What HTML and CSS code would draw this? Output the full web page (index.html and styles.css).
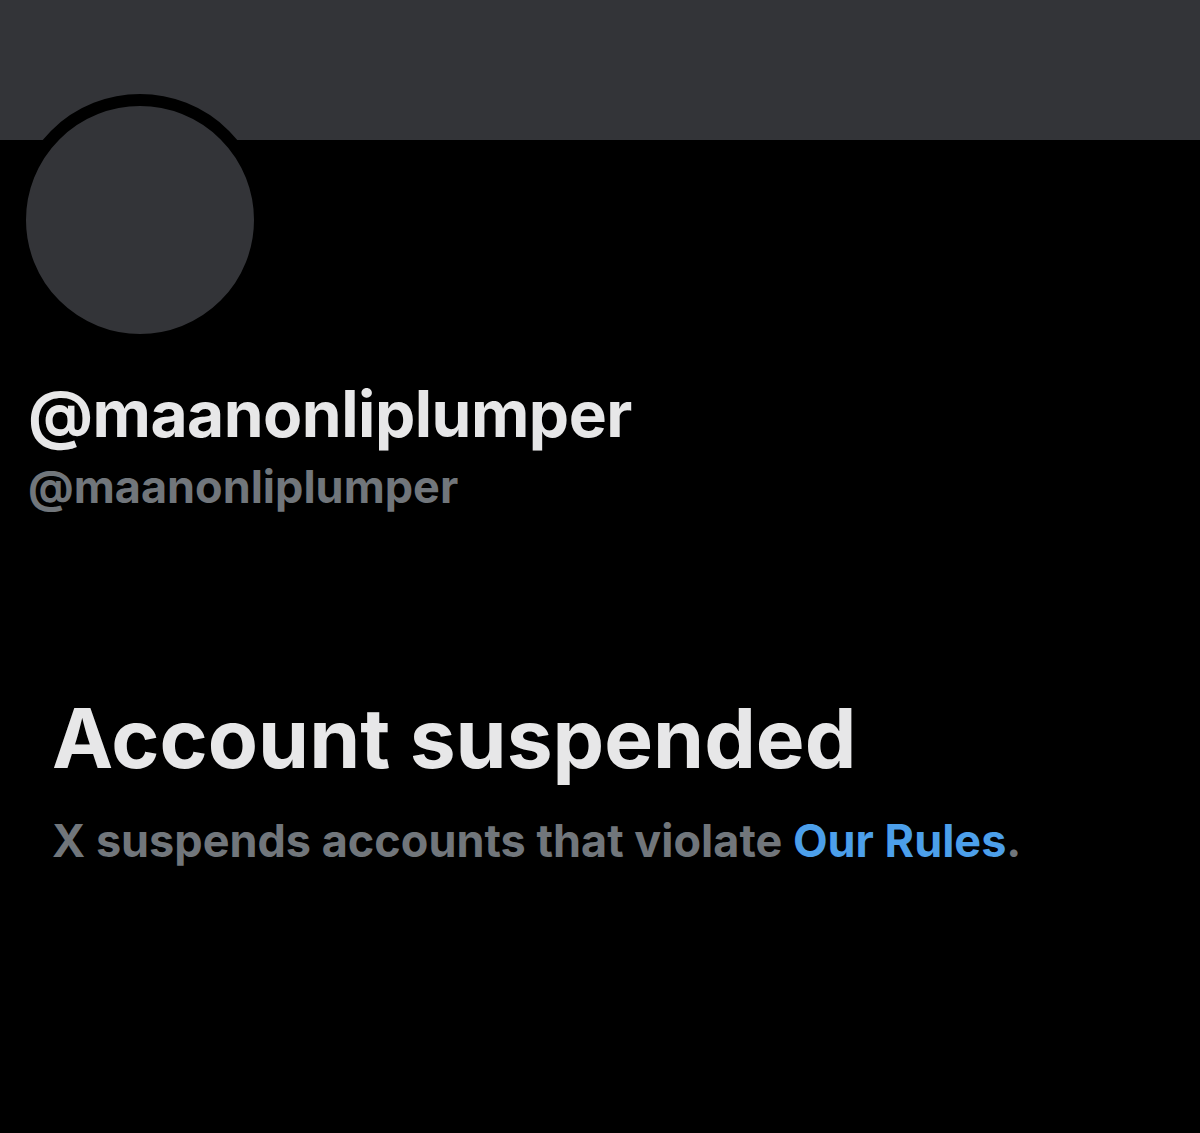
FILE: index.html
```html
<!DOCTYPE html>
<html>
<head>
	<title>@maanonliplumper / X</title>
	<link rel="stylesheet" href="styles.css">
</head>
<body>
	<div class="banner"></div>
	<div class="profile">
		<div class="avatar"></div>
		<div class="names">
			<h1 class="display-name">@maanonliplumper</h1>
			<div class="handle">@maanonliplumper</div>
		</div>
	</div>
	<div class="notice">
		<h2>Account suspended</h2>
		<p>X suspends accounts that violate <a href="#">Our Rules</a>.</p>
	</div>
</body>
</html>
```

FILE: styles.css
```css
body {
	margin: 0;
	background-color: #000;
	color: #e7e7e8;
	font-family: Inter, "Liberation Sans", sans-serif;
}
.banner {
	height: 140px;
	background-color: #333438;
}
.profile {
	padding-left: 14px;
}
.avatar {
	width: 228px;
	height: 228px;
	margin-top: -46px;
	border: 12px solid #000;
	border-radius: 50%;
	background-color: #333438;
}
.names {
	padding-left: 14px;
	margin-top: 32px;
}
.display-name {
	margin: 0;
	font-size: 64px;
	font-weight: 700;
	line-height: 72px;
	letter-spacing: -0.5px;
}
.handle {
	margin-top: 11px;
	font-size: 45px;
	font-weight: 700;
	line-height: 52px;
	color: #71767b;
}
.notice {
	padding: 178px 52px 0;
}
.notice h2 {
	margin: 0;
	font-size: 82px;
	font-weight: 700;
	line-height: 96px;
}
.notice p {
	margin: 28px 0 0;
	font-size: 45px;
	font-weight: 700;
	line-height: 52px;
	color: #71767b;
}
.notice a {
	color: #4c9fea;
	text-decoration: none;
}
```
